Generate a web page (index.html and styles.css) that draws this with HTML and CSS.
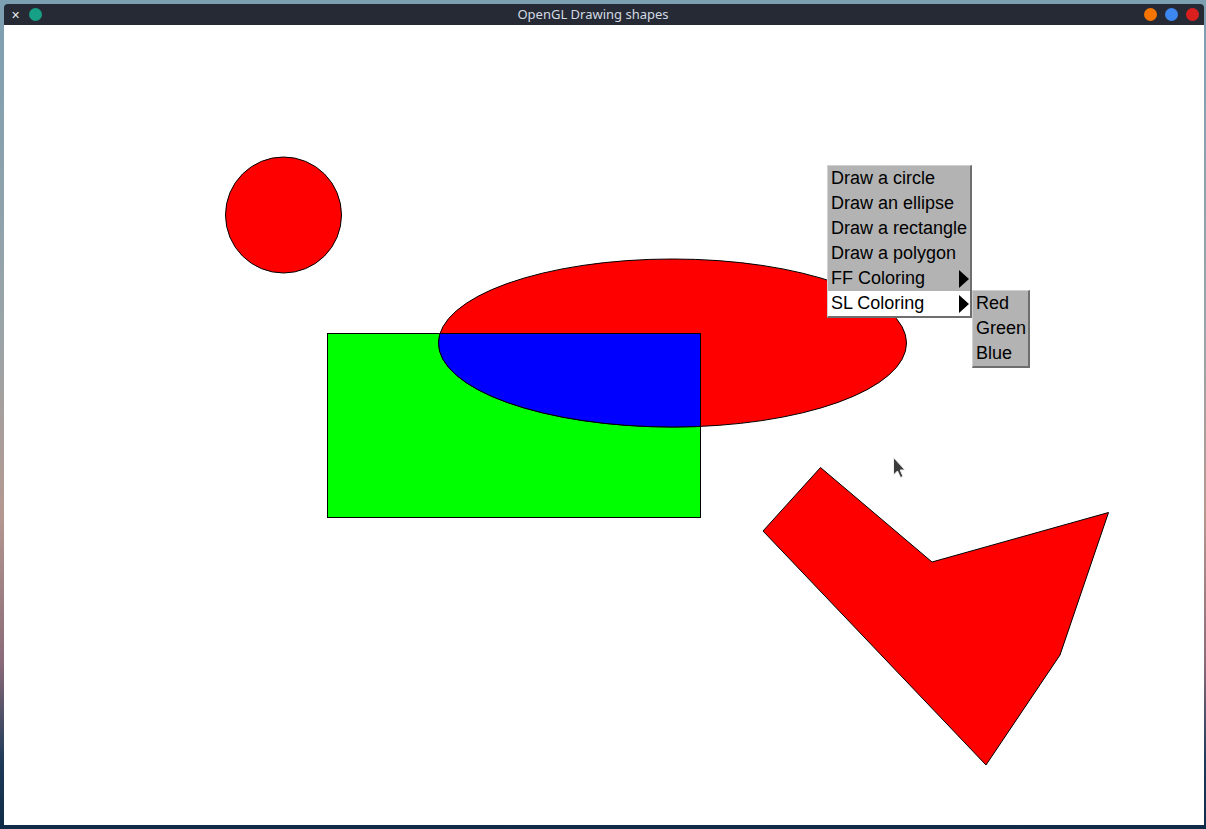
FILE: index.html
```html
<!DOCTYPE html>
<html>
<head>
<meta charset="utf-8">
<title>OpenGL Drawing shapes</title>
<link rel="stylesheet" href="styles.css">
</head>
<body>
<div class="window">
  <div class="titlebar">
    <div class="tb-left">
      <span class="close">&#x2715;</span>
      <span class="dot dot-green"></span>
    </div>
    <div class="title">OpenGL Drawing shapes</div>
    <div class="tb-right">
      <span class="dot dot-orange"></span>
      <span class="dot dot-blue"></span>
      <span class="dot dot-red"></span>
    </div>
  </div>
  <div class="canvas">
    <svg class="scene" width="1200" height="800" viewBox="4 25 1200 800" xmlns="http://www.w3.org/2000/svg">
      <defs>
        <clipPath id="rectclip">
          <rect x="327.5" y="333.5" width="373" height="184"/>
        </clipPath>
      </defs>
      <circle cx="283.5" cy="215" r="58" fill="#ff0000" stroke="#000" stroke-width="1"/>
      <rect x="327.5" y="333.5" width="373" height="184" fill="#00ff00"/>
      <ellipse cx="672.5" cy="343" rx="234" ry="84" fill="#ff0000" stroke="#000" stroke-width="1"/>
      <ellipse cx="672.5" cy="343" rx="234" ry="84" fill="#0000ff" stroke="#000" stroke-width="1" clip-path="url(#rectclip)"/>
      <rect x="327.5" y="333.5" width="373" height="184" fill="none" stroke="#000" stroke-width="1"/>
      <polygon points="820.5,467.5 763,531 986,765 1060,655 1108.5,512.5 932,562" fill="#ff0000" stroke="#000" stroke-width="1"/>
    </svg>

    <div class="menu main-menu">
      <div class="item">Draw a circle</div>
      <div class="item">Draw an ellipse</div>
      <div class="item">Draw a rectangle</div>
      <div class="item">Draw a polygon</div>
      <div class="item sub">FF Coloring<span class="arrow"></span></div>
      <div class="item sub active">SL Coloring<span class="arrow"></span></div>
    </div>
    <div class="menu sub-menu">
      <div class="item">Red</div>
      <div class="item">Green</div>
      <div class="item">Blue</div>
    </div>

    <svg class="cursor" width="16" height="24" viewBox="0 0 16 24" xmlns="http://www.w3.org/2000/svg">
      <path d="M1.5 1.5 L1.5 19 L5.5 15 L8.5 21.5 L11 20.5 L8.2 14 L13 14 Z" fill="#3c3c3c" stroke="#f2f2f2" stroke-width="1"/>
    </svg>
  </div>
</div>
</body>
</html>
```

FILE: styles.css
```css
html, body {
  margin: 0;
  padding: 0;
}

body {
  width: 1206px;
  height: 829px;
  box-sizing: border-box;
  padding: 4px 2px 4px 4px;
  overflow: hidden;
  background: linear-gradient(180deg, #7c9fb2 0%, #9aa4a8 40%, #b49890 62%, #8a6a78 80%, #1c3a58 92%, #0f2b47 100%);
}

.window {
  width: 1200px;
  display: flex;
  flex-direction: column;
}

.titlebar {
  height: 21px;
  background: #262a35;
  border-radius: 4px 4px 0 0;
  display: flex;
  align-items: center;
  justify-content: space-between;
  position: relative;
  font-family: "Noto Sans", "Open Sans", sans-serif;
}

.tb-left {
  display: flex;
  align-items: center;
  gap: 9px;
  padding-left: 6px;
}

.close {
  color: #e8e8e8;
  font-size: 11px;
  line-height: 1;
  width: 10px;
  text-align: center;
}

.dot {
  width: 13px;
  height: 13px;
  border-radius: 50%;
  display: inline-block;
}

.dot-green { background: #16a085; }
.dot-orange { background: #f67400; }
.dot-blue { background: #3d87f0; }
.dot-red { background: #da1f1f; }

.tb-right {
  display: flex;
  align-items: center;
  gap: 8px;
  padding-right: 5px;
}

.title {
  position: absolute;
  left: 0;
  right: 22px;
  text-align: center;
  color: #d3dae3;
  font-size: 13px;
  line-height: 21px;
  pointer-events: none;
}

.canvas {
  position: relative;
  width: 1200px;
  height: 800px;
  background: #ffffff;
}

.scene {
  display: block;
}

.menu {
  position: absolute;
  background: #b3b3b3;
  font-family: "Liberation Sans", Arial, sans-serif;
  font-size: 18px;
  color: #000;
  border-right: 2px solid #6e6e6e;
  border-bottom: 2px solid #6e6e6e;
  border-top: 1px solid #d0d0d0;
  border-left: 1px solid #d0d0d0;
}

.main-menu {
  left: 823px;
  top: 140px;
  width: 142px;
}

.sub-menu {
  left: 968px;
  top: 265px;
  width: 55px;
}

.item {
  height: 25px;
  line-height: 25px;
  padding-left: 3px;
  white-space: nowrap;
  position: relative;
}

.item.active {
  background: #ffffff;
}

.arrow {
  position: absolute;
  right: 1px;
  top: 4px;
  width: 0;
  height: 0;
  border-top: 9px solid transparent;
  border-bottom: 9px solid transparent;
  border-left: 10px solid #000;
}

.cursor {
  position: absolute;
  left: 888px;
  top: 431px;
}
```
